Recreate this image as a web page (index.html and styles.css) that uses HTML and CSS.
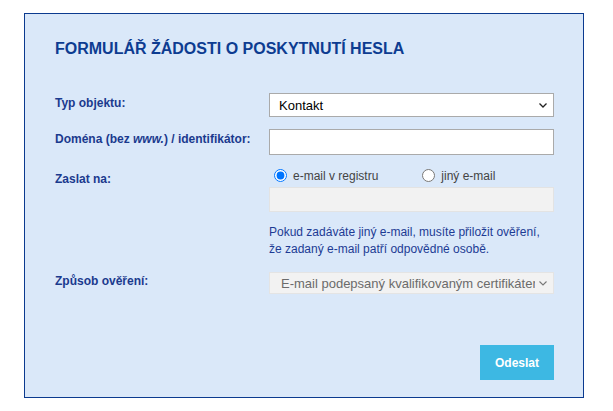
FILE: index.html
```html
<!DOCTYPE html>
<html lang="cs">
<head>
    <meta charset="UTF-8">
    <title>Formulář žádosti o poskytnutí hesla</title>
    <meta name="viewport" content="width=device-width, initial-scale=1">
    <link rel="stylesheet" href="styles.css">
</head>
<body>
    <div class="page">
        <form class="request-form">
            <h1 class="form-title">FORMULÁŘ ŽÁDOSTI O POSKYTNUTÍ HESLA</h1>

            <div class="form-row row-type">
                <label class="form-label" for="objectType">Typ objektu:</label>
                <div class="form-field select-wrap">
                    <select id="objectType" class="form-select">
                        <option>Kontakt</option>
                        <option>Doména</option>
                    </select>
                    <svg class="select-arrow" width="8" height="5" viewBox="0 0 8 5"><path d="M0.5 0.5 L4 4 L7.5 0.5" fill="none" stroke="#222" stroke-width="1.3"/></svg>
                </div>
            </div>

            <div class="form-row row-domain">
                <label class="form-label" for="domain">Doména (bez <em>www.</em>) / identifikátor:</label>
                <div class="form-field">
                    <input id="domain" class="form-input" type="text">
                </div>
            </div>

            <div class="form-row row-send">
                <span class="form-label label-send">Zaslat na:</span>
                <div class="form-field">
                    <div class="radio-line">
                        <label class="radio-option first">
                            <input type="radio" name="sendTo" checked>
                            <span>e-mail v registru</span>
                        </label>
                        <label class="radio-option">
                            <input type="radio" name="sendTo">
                            <span>jiný e-mail</span>
                        </label>
                    </div>
                    <input class="form-input is-disabled" type="text" disabled>
                    <p class="help-text">Pokud zadáváte jiný e-mail, musíte přiložit ověření,<br>že zadaný e-mail patří odpovědné osobě.</p>
                </div>
            </div>

            <div class="form-row row-method">
                <label class="form-label label-method" for="method">Způsob ověření:</label>
                <div class="form-field select-wrap">
                    <select id="method" class="form-select is-disabled" disabled>
                        <option>E-mail podepsaný kvalifikovaným certifikátem</option>
                    </select>
                    <svg class="select-arrow muted" width="8" height="5" viewBox="0 0 8 5"><path d="M0.5 0.5 L4 4 L7.5 0.5" fill="none" stroke="#777" stroke-width="1.1"/></svg>
                </div>
            </div>

            <div class="form-actions">
                <button type="button" class="submit-btn">Odeslat</button>
            </div>
        </form>
    </div>
</body>
</html>
```

FILE: styles.css
```css
    body {
        margin: 0;
        font-family: "Liberation Sans", Arial, sans-serif;
        background: #fff;
    }
    .page {
        padding: 13px 0 0 24px;
    }
    .request-form {
        box-sizing: border-box;
        width: 560px;
        padding: 25px 29px 17px 30px;
        border: 1px solid #0b3a8f;
        background: #dae8f9;
    }
    .form-title {
        margin: 0 0 34px;
        font-size: 16px;
        line-height: 20px;
        font-weight: 700;
        color: #0d3c91;
    }
    .form-row {
        display: grid;
        grid-template-columns: 214px 1fr;
        align-items: start;
    }
    .row-type {
        margin-bottom: 12px;
    }
    .row-domain {
        margin-bottom: 11px;
    }
    .row-send {
        margin-bottom: 14px;
    }
    .form-label {
        padding-top: 2px;
        font-size: 12px;
        line-height: 16px;
        font-weight: 700;
        color: #1b3a8e;
    }
    .form-label em {
        font-style: italic;
    }
    .label-send {
        padding-top: 5px;
    }
    .label-method {
        padding-top: 1px;
    }
    .select-wrap {
        position: relative;
    }
    .select-arrow {
        position: absolute;
        right: 7px;
        top: 10px;
        pointer-events: none;
    }
    .select-arrow.muted {
        top: 9px;
    }
    .form-select {
        display: block;
        box-sizing: border-box;
        width: 100%;
        height: 24px;
        margin: 0;
        padding: 0 22px 0 9px;
        border: 1px solid #aaa;
        border-radius: 0;
        background: #fff;
        font-family: "Liberation Sans", Arial, sans-serif;
        font-size: 13px;
        color: #000;
        appearance: none;
        -webkit-appearance: none;
    }
    .form-select.is-disabled {
        height: 22px;
        padding-left: 11px;
        padding-right: 18px;
        border-color: #e4e4e4;
        background: #f2f2f2;
        color: #6b6b6b;
        opacity: 1;
    }
    .form-input {
        display: block;
        box-sizing: border-box;
        width: 100%;
        height: 26px;
        margin: 0;
        border: 1px solid #aaa;
        border-radius: 0;
        background: #fff;
    }
    .form-input.is-disabled {
        height: 25px;
        border-color: #e3e3e3;
        background: #f2f2f2;
    }
    .radio-line {
        display: flex;
        align-items: center;
        height: 19px;
        margin-bottom: 2px;
    }
    .radio-option {
        display: flex;
        align-items: center;
        font-size: 12px;
        line-height: 14px;
        color: #444;
    }
    .radio-option.first {
        margin-right: 39px;
    }
    .radio-option input {
        width: 13px;
        height: 13px;
        margin: 0 6px 0 5px;
    }
    .help-text {
        margin: 12px 0 0;
        font-size: 12px;
        line-height: 17px;
        color: #1d3b94;
    }
    .form-actions {
        display: flex;
        justify-content: flex-end;
        margin-top: 51px;
    }
    .submit-btn {
        width: 74px;
        height: 35px;
        padding: 0;
        border: none;
        border-radius: 0;
        background: #3db8e3;
        color: #fff;
        font-family: "Liberation Sans", Arial, sans-serif;
        font-size: 12px;
        font-weight: 700;
        cursor: pointer;
    }
```
